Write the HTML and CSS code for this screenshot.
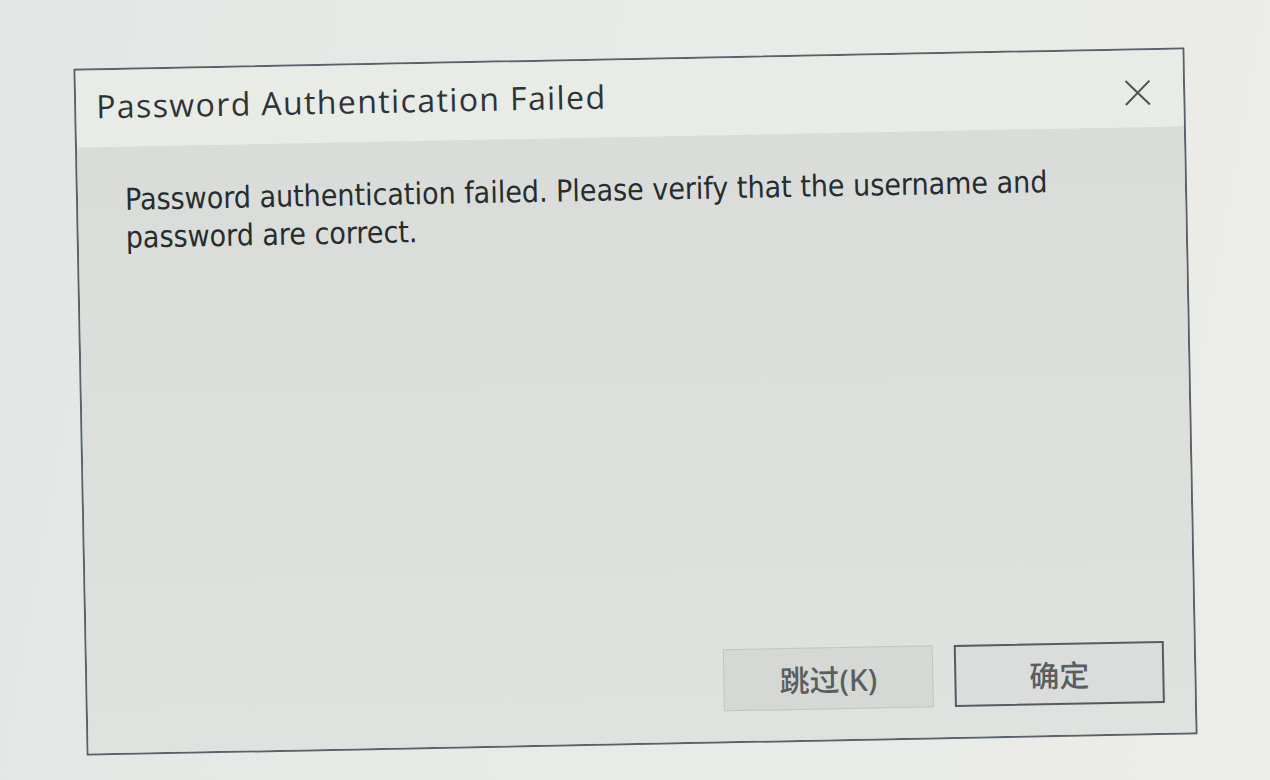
FILE: index.html
```html
<!DOCTYPE html>
<html lang="en">
<head>
<meta charset="utf-8">
<title>Password Authentication Failed</title>
<link rel="stylesheet" href="styles.css">
</head>
<body>
<div class="screen">
  <div class="dialog">
    <div class="titlebar">
      <div class="title">Password Authentication Failed</div>
      <button class="close" aria-label="Close">
        <svg width="27" height="27" viewBox="0 0 27 27"><path d="M1.5 1.5 L25.5 25.5 M25.5 1.5 L1.5 25.5" stroke="#4d5255" stroke-width="2" fill="none"/></svg>
      </button>
    </div>
    <div class="content">
      <p class="message">Password authentication failed. Please verify that the username and<br>password are correct.</p>
      <div class="buttons">
        <button class="btn skip">跳过(K)</button>
        <button class="btn ok">确定</button>
      </div>
    </div>
  </div>
</div>
</body>
</html>
```
FILE: styles.css
```css
html, body {
  margin: 0;
  padding: 0;
}
body {
  width: 1270px;
  height: 780px;
  overflow: hidden;
  background: linear-gradient(100deg, #e2e7e5 0%, #e8ebe8 50%, #ecece8 100%);
  font-family: "Open Sans", "Noto Sans", "Noto Sans CJK SC", sans-serif;
}
.screen {
  width: 1270px;
  height: 780px;
  box-sizing: border-box;
  padding-top: 22px;
  display: flex;
  align-items: center;
  justify-content: center;
}
.dialog {
  width: 1111px;
  height: 687px;
  box-sizing: border-box;
  border: 2px solid #58626a;
  background: #dfe2df;
  display: flex;
  flex-direction: column;
  transform: rotate(-1.1deg);
}
.titlebar {
  height: 77px;
  flex: none;
  box-sizing: border-box;
  background: #e9ebe6;
  display: flex;
  align-items: flex-start;
  justify-content: space-between;
  padding: 14px 32px 0 20px;
}
.title {
  font-size: 32px;
  line-height: 1.362;
  color: #2e3335;
  letter-spacing: 1.4px;
}
.close {
  border: 0;
  background: none;
  padding: 0;
  width: 27px;
  height: 27px;
  margin-top: 15px;
  display: flex;
}
.content {
  flex: 1;
  display: flex;
  flex-direction: column;
  background: linear-gradient(180deg, #d9dcd9 0%, #dcdfdc 50%, #e0e2df 100%);
  padding: 0 30px 30px 47px;
}
.message {
  margin: 34px 0 0 0;
  font-family: "DejaVu Sans Condensed", "Noto Sans", sans-serif;
  font-size: 30px;
  line-height: 38px;
  color: #272c2e;
  letter-spacing: 0;
}
.buttons {
  margin-top: auto;
  display: flex;
  justify-content: flex-end;
  gap: 21px;
}
.btn {
  width: 210px;
  height: 62px;
  box-sizing: border-box;
  font-family: "Noto Sans", "Noto Sans CJK SC", sans-serif;
  font-size: 30px;
  font-weight: 500;
  color: #5a5e60;
  padding: 0;
}
.skip {
  border: 1px solid #c2c6c4;
  background: #d5d8d5;
}
.ok {
  border: 2px solid #545c62;
  background: #dadddb;
}
```
